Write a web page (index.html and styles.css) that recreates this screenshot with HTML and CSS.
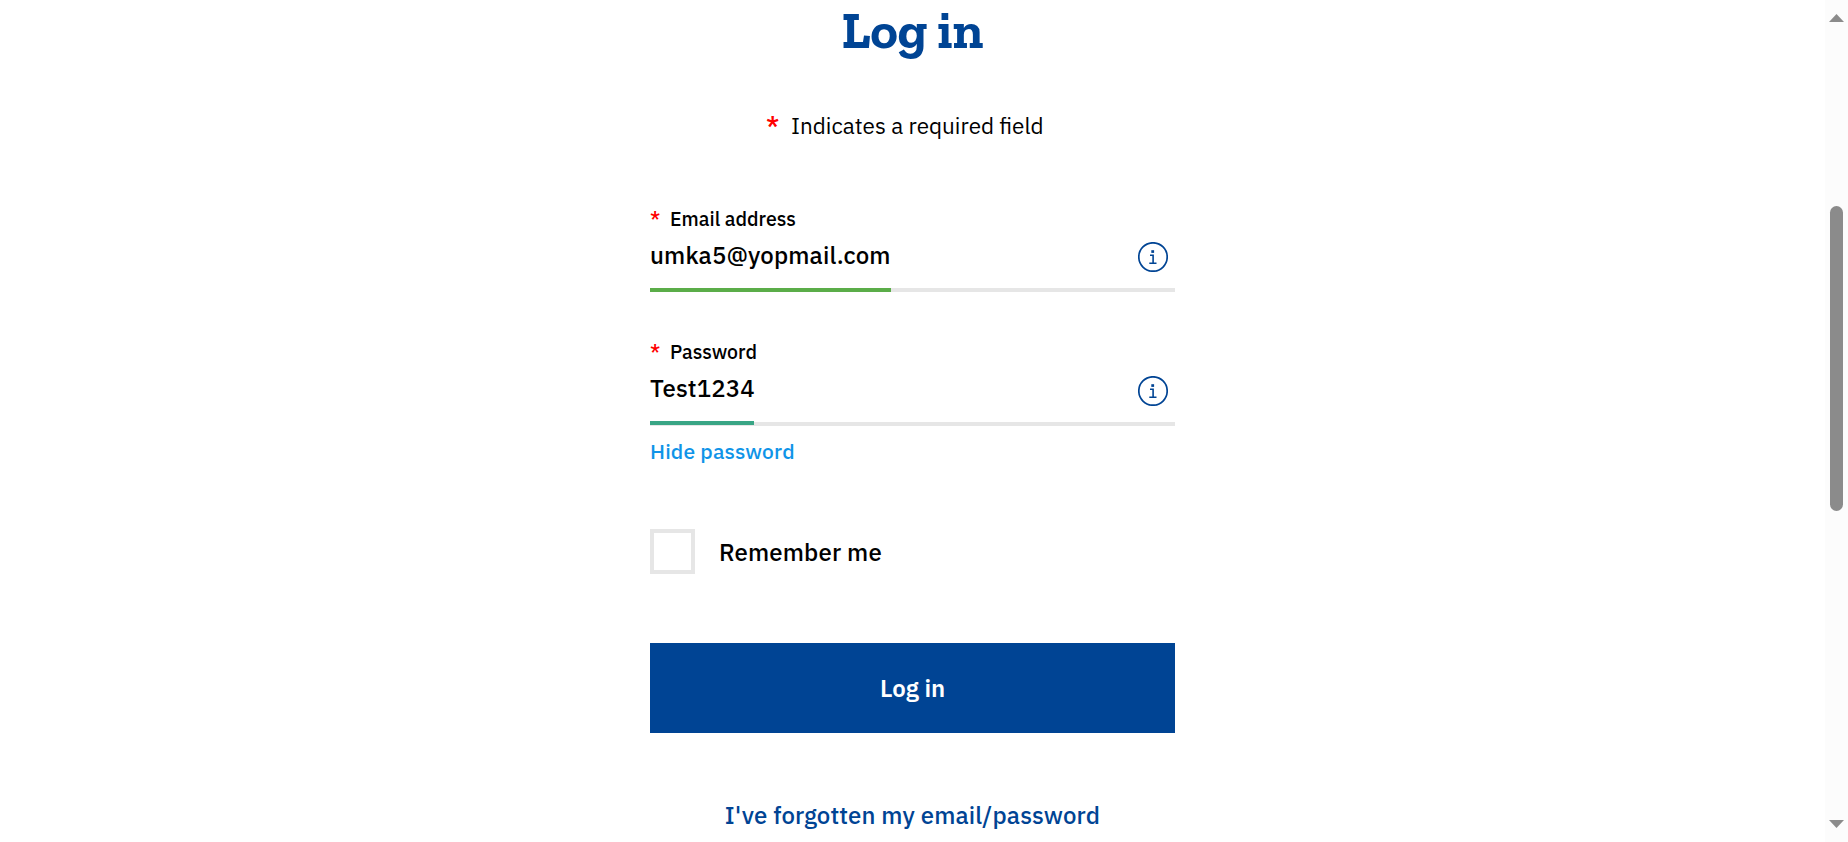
FILE: index.html
```html
<!DOCTYPE html>
<html lang="en">
<head>
<meta charset="utf-8">
<title>Log in</title>
<link rel="stylesheet" href="styles.css">
</head>
<body>
<div class="page">
  <main class="form">
    <h1 class="title">Log in</h1>
    <p class="note"><span class="star">*</span><span class="note-text">Indicates a required field</span></p>

    <section class="field">
      <label class="label"><span class="star">*</span><span class="label-text">Email address</span></label>
      <div class="entry">
        <span class="value">umka5@yopmail.com</span>
        <svg class="info" viewBox="0 0 30 30"><circle cx="15" cy="15" r="14.2"/><path class="stem" d="M12 13.2h3.1v8.1M11.3 21.3h7.2"/><rect class="dot" x="13.3" y="8.2" width="2.8" height="2.7"/></svg>
      </div>
      <div class="track"><div class="fill fill-email"></div></div>
    </section>

    <section class="field field-password">
      <label class="label"><span class="star">*</span><span class="label-text">Password</span></label>
      <div class="entry">
        <span class="value">Test1234</span>
        <svg class="info info-low" viewBox="0 0 30 30"><circle cx="15" cy="15" r="14.2"/><path class="stem" d="M12 13.2h3.1v8.1M11.3 21.3h7.2"/><rect class="dot" x="13.3" y="8.2" width="2.8" height="2.7"/></svg>
      </div>
      <div class="track track-password"><div class="fill fill-pass"></div></div>
      <a class="hide">Hide password</a>
    </section>

    <label class="remember"><span class="box"></span><span>Remember me</span></label>
    <button class="submit"><span>Log in</span></button>
    <a class="forgot">I've forgotten my email/password</a>
  </main>
  <aside class="scrollbar">
    <svg class="arrow" viewBox="0 0 15 8"><path d="M7.5 0L15 8H0z"/></svg>
    <div class="thumb"></div>
    <svg class="arrow" viewBox="0 0 15 8"><path d="M0 0h15L7.5 8z"/></svg>
  </aside>
</div>
</body>
</html>
```
FILE: styles.css
```css
* { box-sizing: border-box; }
body { margin: 0; background: #fff; color: #000; overflow: hidden; font-family: "IBM Plex Sans", "Open Sans", sans-serif; font-weight: 500; letter-spacing: 0.15px; white-space: nowrap; }
.page { display: flex; justify-content: space-between; height: 842px; }
.form { display: flex; flex-direction: column; width: 525px; margin-left: 650px; padding-top: 2px; }
.title { margin: 0; height: 60px; font: 700 52px/56px "Roboto Slab", "Zilla Slab", "DejaVu Serif", serif; color: #004494; text-align: center; letter-spacing: 0; }
.star { color: #f00; }
.note { display: flex; margin: 48px 0 67px 116px; height: 30px; font: 400 22.5px/32px "IBM Plex Sans", "Noto Sans", sans-serif; letter-spacing: 0; }
.note .star { width: 25px; font-size: 26px; font-weight: 500; line-height: 30px; }
.field { display: flex; flex-direction: column; }
.field-password { margin-top: 48px; }
.label { display: flex; height: 24px; font-size: 19.5px; line-height: 24px; letter-spacing: 0; }
.label .star { width: 20px; font-size: 20px; }
.entry { display: flex; justify-content: space-between; height: 48px; padding: 9px 7px 9px 0; }
.value { font-size: 24px; line-height: 30px; }
.info { width: 30px; height: 30px; margin-top: 2px; fill: none; stroke: #004494; stroke-width: 1.7; }
.info-low { margin-top: 3px; }
.stem { stroke-width: 1.6; }
.dot { fill: #004494; stroke: none; }
.track { margin-top: 9px; height: 4px; background: #e6e6e6; }
.track-password { margin-top: 10px; }
.fill { height: 4px; }
.fill-email { width: 241px; background: #5bad49; }
.fill-pass { position: relative; top: -1px; width: 104px; background: #39a585; }
.hide { margin-top: 11px; height: 28px; font-size: 21px; line-height: 28px; color: #0f94e8; }
.remember { display: flex; align-items: center; gap: 24px; height: 45px; margin-top: 64px; font-size: 24px; line-height: 30px; }
.box { width: 45px; height: 45px; border: 4px solid #e6e6e6; }
.submit { margin-top: 69px; height: 90px; padding: 0; border: 0; background: #004494; color: #fff; font: 600 24px/30px "IBM Plex Sans", "Open Sans", sans-serif; }
.forgot { margin-top: 67px; height: 30px; text-align: center; font-size: 24px; line-height: 30px; color: #004494; }
.scrollbar { display: flex; flex-direction: column; align-items: center; width: 23px; padding: 14px 0; background: #fcfcfc; }
.arrow { width: 15px; height: 8px; fill: #8b8b8b; }
.thumb { width: 13px; height: 305px; margin: 184px 0 309px; border-radius: 7px; background: #8b8b8b; }
```
